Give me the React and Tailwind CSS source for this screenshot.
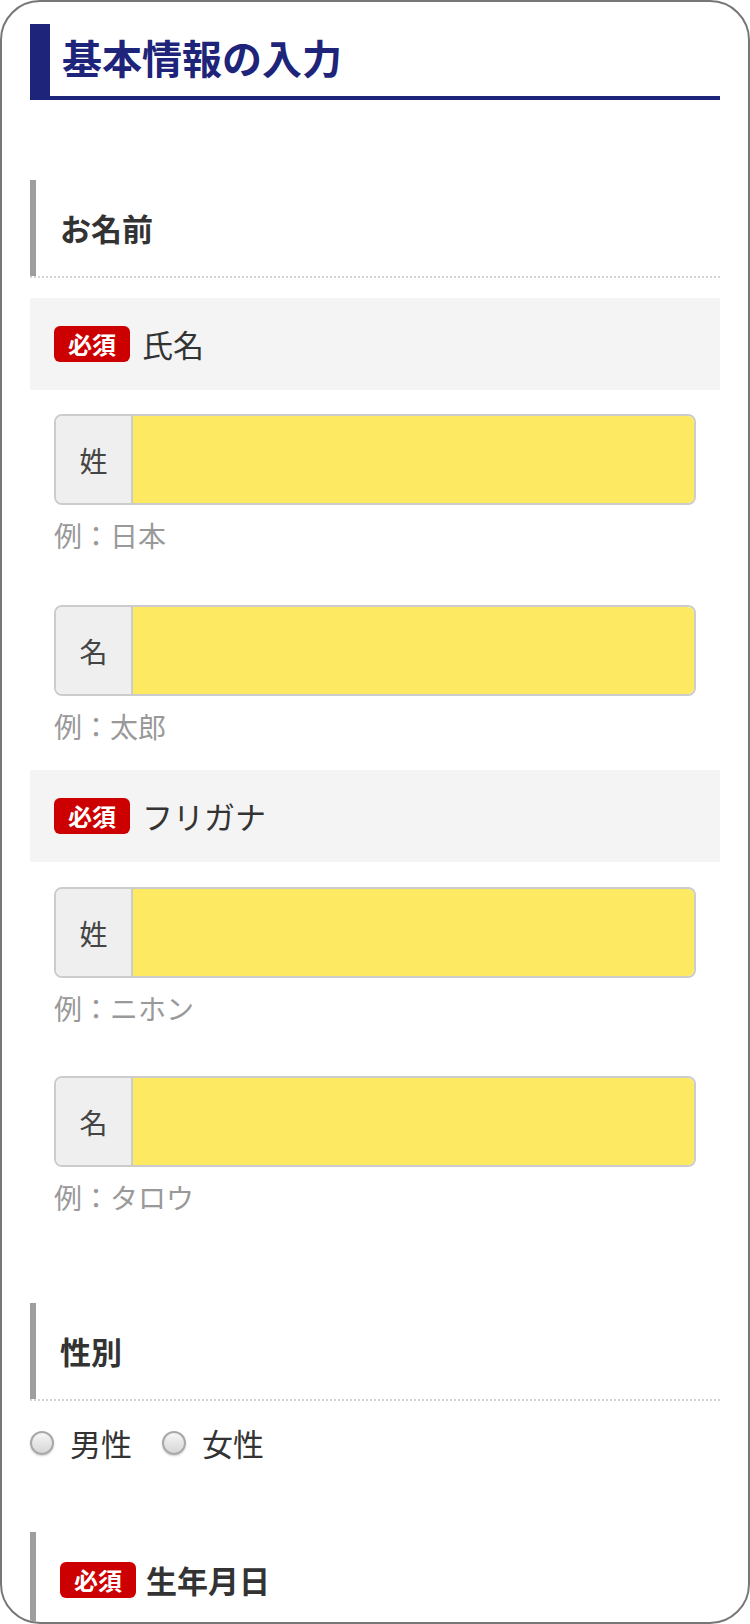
const font = { fontFamily: '"Noto Sans CJK JP", "Noto Sans", sans-serif' }

const Badge = () => (
    <span className="inline-flex items-center justify-center w-[76px] h-[36px] rounded-[6px] bg-[#cc0000] text-white text-[24px] font-bold leading-none">
        必須
    </span>
)

const SectionHeading = ({ children, required, className }) => (
    <div className={"flex items-center h-[96px] border-l-[6px] border-solid border-l-[#9e9e9e] pl-[24px] " + (className || "")}>
        {required && <span className="mr-[10px]"><Badge /></span>}
        <h3 className="text-[31px] font-bold text-[#333]">{children}</h3>
    </div>
)

const FieldLabel = ({ children, className }) => (
    <div className={"flex items-center h-[92px] bg-[#f4f4f4] pl-[24px] " + (className || "")}>
        <Badge />
        <span className="ml-[12px] text-[31px] text-[#333]">{children}</span>
    </div>
)

const TextInput = ({ label, hint, className }) => (
    <div className={"mx-[24px] " + (className || "")}>
        <div className="flex h-[91px] border-2 border-[#cccccc] rounded-[8px] overflow-hidden">
            <div className="w-[77px] flex items-center justify-center bg-[#efefef] border-r-2 border-[#cccccc] text-[28px] text-[#444]">
                {label}
            </div>
            <input className="flex-1 bg-[#feea62] outline-none px-3 text-[28px]" type="text" />
        </div>
        <p className="mt-[10px] h-[40px] leading-[40px] text-[28px] text-[#999]">{hint}</p>
    </div>
)

const Radio = ({ label, className }) => (
    <label className={"flex items-center " + (className || "")}>
        <span className="w-[24px] h-[24px] rounded-full border-2 border-[#a8a8a8] bg-linear-to-b from-[#f6f6f6] to-[#d6d6d6] shadow-[0_1px_2px_rgba(0,0,0,0.2)]"></span>
        <span className="ml-[16px] text-[31px] text-[#333]">{label}</span>
    </label>
)

const Dotted = () => <div className="border-b-2 border-dotted border-[#d4d4d4]"></div>

const App = () => {
    return (
        <div style={font} className="w-[750px] h-[1624px] bg-white border-2 border-[#777] rounded-[40px] overflow-hidden px-[28px]">
            <div className="mt-[22px] flex items-center h-[76px] border-l-[20px] border-b-4 border-[#1d2479] pl-[12px] pb-[6px]">
                <h2 className="text-[40px] font-bold text-[#1d2479] leading-none">基本情報の入力</h2>
            </div>

            <SectionHeading className="mt-[80px]">お名前</SectionHeading>
            <Dotted />

            <FieldLabel className="mt-[20px]">氏名</FieldLabel>
            <TextInput className="mt-[24px]" label="姓" hint="例：日本" />
            <TextInput className="mt-[50px]" label="名" hint="例：太郎" />

            <FieldLabel className="mt-[24px]">フリガナ</FieldLabel>
            <TextInput className="mt-[25px]" label="姓" hint="例：ニホン" />
            <TextInput className="mt-[48px]" label="名" hint="例：タロウ" />

            <SectionHeading className="mt-[86px]">性別</SectionHeading>
            <Dotted />
            <div className="flex items-center h-[44px] mt-[20px]">
                <Radio label="男性" />
                <Radio label="女性" className="ml-[30px]" />
            </div>

            <SectionHeading className="mt-[67px]" required>生年月日</SectionHeading>
        </div>
    )
}

export default App
